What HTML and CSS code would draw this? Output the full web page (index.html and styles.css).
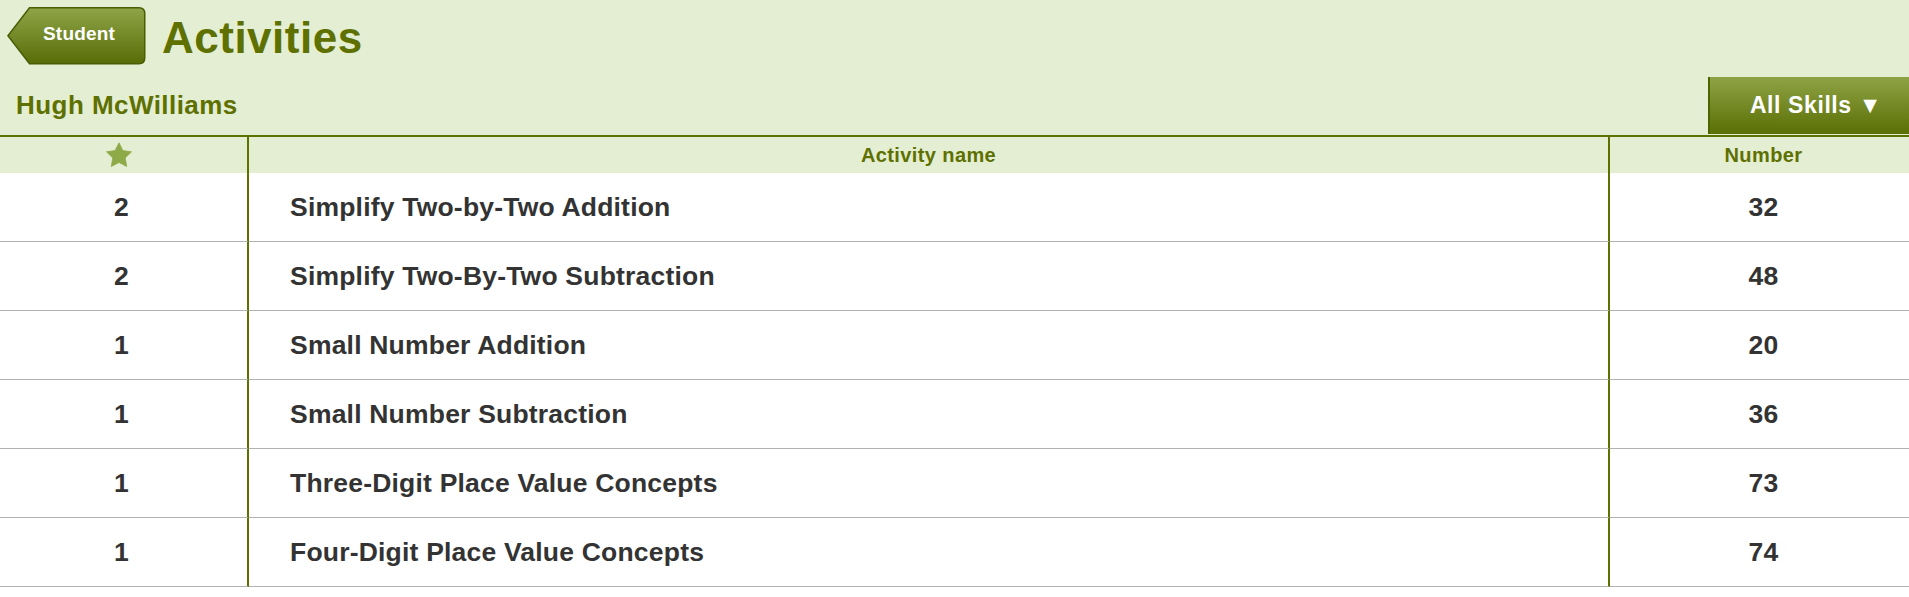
FILE: index.html
```html
<!DOCTYPE html>
<html lang="en">
<head>
<meta charset="utf-8">
<title>Activities</title>
<link rel="stylesheet" href="styles.css">
</head>
<body>
<header class="header">
  <div class="top-row">
    <a class="back" href="#">
      <svg class="back-shape" width="139" height="58" viewBox="0 0 139 58" aria-hidden="true">
        <defs>
          <linearGradient id="bg" x1="0" y1="0" x2="0" y2="1">
            <stop offset="0" stop-color="#8fa447"/>
            <stop offset="1" stop-color="#586d07"/>
          </linearGradient>
        </defs>
        <path d="M22.5 0.75 H132 Q137.75 0.75 137.75 6.5 V50.5 Q137.75 56.75 132 56.75 H22.5 L0.9 28.75 Z" fill="url(#bg)" stroke="#4a5c05" stroke-width="1.5"/>
      </svg>
      <span class="back-label">Student</span>
    </a>
    <h1 class="title">Activities</h1>
  </div>
  <div class="sub-row">
    <h2 class="student-name">Hugh McWilliams</h2>
    <button class="skills" type="button">All Skills ▼</button>
  </div>
</header>

<div class="sheet">
  <div class="row head">
    <div class="cell c1">
      <svg class="star" width="30" height="30" viewBox="0 0 24 24" aria-label="Stars">
        <path d="M12 2.2l3.09 6.26 6.91 1.01-5 4.87 1.18 6.88L12 17.970l-6.18 3.25L7 14.34 2 9.47l6.91-1.01z" fill="#8eaa48" stroke="#8eaa48" stroke-width="0.6" stroke-linejoin="round"/>
      </svg>
    </div>
    <div class="cell c2">Activity name</div>
    <div class="cell c3">Number</div>
  </div>

  <div class="row">
    <div class="cell c1">2</div>
    <div class="cell c2">Simplify Two-by-Two Addition</div>
    <div class="cell c3">32</div>
  </div>
  <div class="row">
    <div class="cell c1">2</div>
    <div class="cell c2">Simplify Two-By-Two Subtraction</div>
    <div class="cell c3">48</div>
  </div>
  <div class="row">
    <div class="cell c1">1</div>
    <div class="cell c2">Small Number Addition</div>
    <div class="cell c3">20</div>
  </div>
  <div class="row">
    <div class="cell c1">1</div>
    <div class="cell c2">Small Number Subtraction</div>
    <div class="cell c3">36</div>
  </div>
  <div class="row">
    <div class="cell c1">1</div>
    <div class="cell c2">Three-Digit Place Value Concepts</div>
    <div class="cell c3">73</div>
  </div>
  <div class="row">
    <div class="cell c1">1</div>
    <div class="cell c2">Four-Digit Place Value Concepts</div>
    <div class="cell c3">74</div>
  </div>
</div>
</body>
</html>
```

FILE: styles.css
```css
html, body {
  margin: 0;
  padding: 0;
  background: #ffffff;
}

body {
  font-family: "Liberation Sans", Arial, sans-serif;
  font-weight: bold;
  color: #333333;
}

.header {
  background: #e4eed2;
  border-bottom: 2px solid #5e7000;
}

.top-row {
  display: flex;
  align-items: flex-start;
  height: 77px;
  box-sizing: border-box;
  padding: 7px 0 0 7px;
}

.back {
  position: relative;
  display: flex;
  align-items: center;
  width: 139px;
  height: 58px;
  box-sizing: border-box;
  padding: 0 0 4px 36px;
  text-decoration: none;
}

.back-shape {
  position: absolute;
  left: 0;
  top: 0;
}

.back-label {
  position: relative;
  color: #ffffff;
  font-size: 19px;
  font-weight: bold;
  letter-spacing: 0.2px;
}

.title {
  margin: 9px 0 0 16px;
  font-size: 44px;
  line-height: 44px;
  font-weight: bold;
  letter-spacing: 0.5px;
  color: #5e7000;
}

.sub-row {
  display: flex;
  justify-content: space-between;
  align-items: flex-start;
  height: 58px;
}

.student-name {
  margin: 15px 0 0 16px;
  font-size: 26px;
  line-height: 26px;
  font-weight: bold;
  letter-spacing: 0.45px;
  color: #5e7000;
}

.skills {
  width: 201px;
  height: 57px;
  margin: 0;
  padding: 0 0 0 13px;
  border: none;
  border-left: 2px solid #4f6300;
  background: linear-gradient(#8fa346, #5a6f04);
  color: #ffffff;
  font-family: "Liberation Sans", Arial, sans-serif;
  font-size: 23px;
  font-weight: bold;
  letter-spacing: 0.6px;
  cursor: pointer;
}

.sheet {
  display: flex;
  flex-direction: column;
}

.row {
  display: grid;
  grid-template-columns: 249px 1361px 1fr;
}

.cell {
  display: flex;
  align-items: center;
  box-sizing: border-box;
  height: 69px;
  border-bottom: 1px solid #b3b3b3;
  font-size: 26.5px;
  letter-spacing: 0.2px;
  color: #333333;
}

.c1 {
  justify-content: center;
  padding-right: 4px;
  border-right: 2px solid #5e7000;
}

.c2 {
  padding-left: 41px;
  border-right: 2px solid #5e7000;
}

.c3 {
  justify-content: center;
  padding-left: 8px;
}

.head .cell {
  height: 36px;
  border-bottom: none;
  background: #e4eed2;
  font-size: 20px;
  letter-spacing: 0.4px;
  color: #5e7000;
}

.head .c2 {
  justify-content: center;
  padding-left: 0;
}

.star {
  display: block;
  margin-right: 5px;
}
```
